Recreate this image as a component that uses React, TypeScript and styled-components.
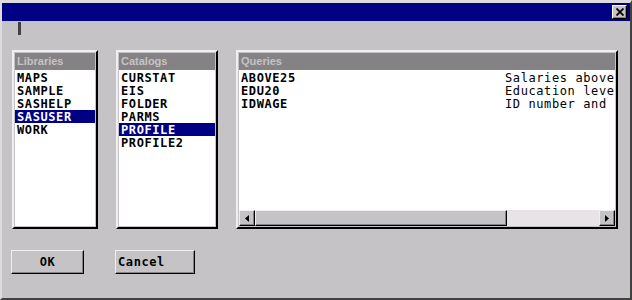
import React from "react";
import styled, { createGlobalStyle } from "styled-components";

const Global = createGlobalStyle`
  html, body { margin: 0; padding: 0; background: #c6c3c6; overflow: hidden; }
  body { font-family: "DejaVu Sans Mono", monospace; }
  * { box-sizing: border-box; }
`;

const Window = styled.div`
  width: 632px;
  height: 300px;
  background: #c6c3c6;
  border-style: solid;
  border-width: 3px 2px 2px 2px;
  border-color: #dedbde #424142 #424142 #dedbde;
  display: flex;
  flex-direction: column;
`;

const TitleBar = styled.div`
  height: 18px;
  flex: none;
  background: #000084;
  display: flex;
  align-items: center;
  justify-content: flex-end;
  padding-right: 3px;
`;

const CloseButton = styled.button`
  width: 15px;
  height: 14px;
  padding: 0;
  margin: 0;
  background: #c6c3c6;
  border: 1px solid;
  border-color: #ffffff #000000 #000000 #ffffff;
  box-shadow: inset -1px -1px #848284;
  display: flex;
  align-items: center;
  justify-content: center;
`;

const CursorRow = styled.div`
  height: 29px;
  flex: none;
  padding: 1px 0 0 16px;
`;

const Cursor = styled.div`
  width: 3px;
  height: 13px;
  background: #424142;
`;

const PanelsRow = styled.div`
  display: flex;
  gap: 18px;
  margin-left: 10px;
  height: 179px;
  flex: none;
`;

const Panel = styled.div<{ $w: number }>`
  width: ${(p) => p.$w}px;
  height: 100%;
  border: 2px solid;
  border-color: #efefef #000000 #000000 #efefef;
  padding: 1px;
  background: #c6c3c6;
  display: flex;
  flex-direction: column;
`;

const Header = styled.div`
  height: 17px;
  flex: none;
  background: #848284;
  color: #c6c3c6;
  font: bold 11px "Liberation Sans", Arial, sans-serif;
  line-height: 17px;
  padding-left: 2px;
`;

const List = styled.div`
  flex: 1;
  min-height: 0;
  background: #ffffff;
  padding-top: 1px;
  overflow: hidden;
`;

const Item = styled.div<{ $selected?: boolean }>`
  height: 13px;
  line-height: 13px;
  font: bold 12px "DejaVu Sans Mono", monospace;
  letter-spacing: 0.6px;
  padding-left: 2px;
  white-space: pre;
  background: ${(p) => (p.$selected ? "#000084" : "transparent")};
  color: ${(p) => (p.$selected ? "#ffffff" : "#000000")};
`;

const QueryRow = styled.div`
  display: flex;
  height: 13px;
  line-height: 13px;
  padding-left: 2px;
  white-space: pre;
  color: #000;
  letter-spacing: 0.6px;
`;

const QueryName = styled.span`
  width: 264px;
  flex: none;
  font: bold 12px "DejaVu Sans Mono", monospace;
`;

const QueryDesc = styled.span`
  flex: none;
  font: 12px "DejaVu Sans Mono", monospace;
`;

const ScrollBar = styled.div`
  height: 16px;
  flex: none;
  display: flex;
  background: #e7e3e7;
`;

const ScrollButton = styled.div`
  width: 16px;
  height: 16px;
  flex: none;
  background: #c6c3c6;
  border: 1px solid;
  border-color: #efefef #000000 #000000 #efefef;
  box-shadow: inset -1px -1px #848284;
  display: flex;
  align-items: center;
  justify-content: center;
`;

const Thumb = styled.div<{ $w: number }>`
  width: ${(p) => p.$w}px;
  height: 16px;
  flex: none;
  background: #c6c3c6;
  border: 1px solid;
  border-color: #efefef #000000 #000000 #efefef;
  box-shadow: inset -1px -1px #848284;
`;

const Track = styled.div`
  flex: 1;
  background: #e7e3e7;
`;

const ButtonsRow = styled.div`
  display: flex;
  gap: 31px;
  margin: 21px 0 0 9px;
`;

const PushButton = styled.button<{ $w: number; $align: "center" | "flex-start" }>`
  width: ${(p) => p.$w}px;
  height: 24px;
  margin: 0;
  padding: 0 2px;
  background: #c6c3c6;
  border: 1px solid;
  border-color: #efefef #000000 #000000 #efefef;
  box-shadow: inset -1px -1px #848284;
  display: flex;
  align-items: center;
  justify-content: ${(p) => p.$align};
  font: bold 12px "DejaVu Sans Mono", monospace;
  letter-spacing: 0.6px;
  color: #000;
  white-space: pre;
`;

const Arrow = ({ dir }: { dir: "left" | "right" }) => (
  <svg width="4" height="7" viewBox="0 0 4 7">
    {dir === "left" ? (
      <polygon points="4,0 4,7 0,3.5" fill="#000" />
    ) : (
      <polygon points="0,0 0,7 4,3.5" fill="#000" />
    )}
  </svg>
);

const libraries = ["MAPS", "SAMPLE", "SASHELP", "SASUSER", "WORK"];
const catalogs = ["CURSTAT", "EIS", "FOLDER", "PARMS", "PROFILE", "PROFILE2"];
const queries = [
  { name: "ABOVE25", desc: "Salaries above" },
  { name: "EDU20", desc: "Education leve" },
  { name: "IDWAGE", desc: "ID number and" },
];

export default function App() {
  return (
    <>
      <Global />
      <Window>
        <TitleBar>
          <CloseButton aria-label="Close">
            <svg width="8" height="8" viewBox="0 0 8 8">
              <path d="M0.5 0.5 L7.5 7.5 M7.5 0.5 L0.5 7.5" stroke="#000" strokeWidth="1.8" />
            </svg>
          </CloseButton>
        </TitleBar>
        <CursorRow>
          <Cursor />
        </CursorRow>
        <PanelsRow>
          <Panel $w={86}>
            <Header>Libraries</Header>
            <List>
              {libraries.map((l) => (
                <Item key={l} $selected={l === "SASUSER"}>
                  {l}
                </Item>
              ))}
            </List>
          </Panel>
          <Panel $w={102}>
            <Header>Catalogs</Header>
            <List>
              {catalogs.map((c) => (
                <Item key={c} $selected={c === "PROFILE"}>
                  {c}
                </Item>
              ))}
            </List>
          </Panel>
          <Panel $w={382}>
            <Header>Queries</Header>
            <List>
              {queries.map((q) => (
                <QueryRow key={q.name}>
                  <QueryName>{q.name}</QueryName>
                  <QueryDesc>{q.desc}</QueryDesc>
                </QueryRow>
              ))}
            </List>
            <ScrollBar>
              <ScrollButton>
                <Arrow dir="left" />
              </ScrollButton>
              <Thumb $w={252} />
              <Track />
              <ScrollButton>
                <Arrow dir="right" />
              </ScrollButton>
            </ScrollBar>
          </Panel>
        </PanelsRow>
        <ButtonsRow>
          <PushButton $w={73} $align="center">OK</PushButton>
          <PushButton $w={80} $align="flex-start">Cancel</PushButton>
        </ButtonsRow>
      </Window>
    </>
  );
}
